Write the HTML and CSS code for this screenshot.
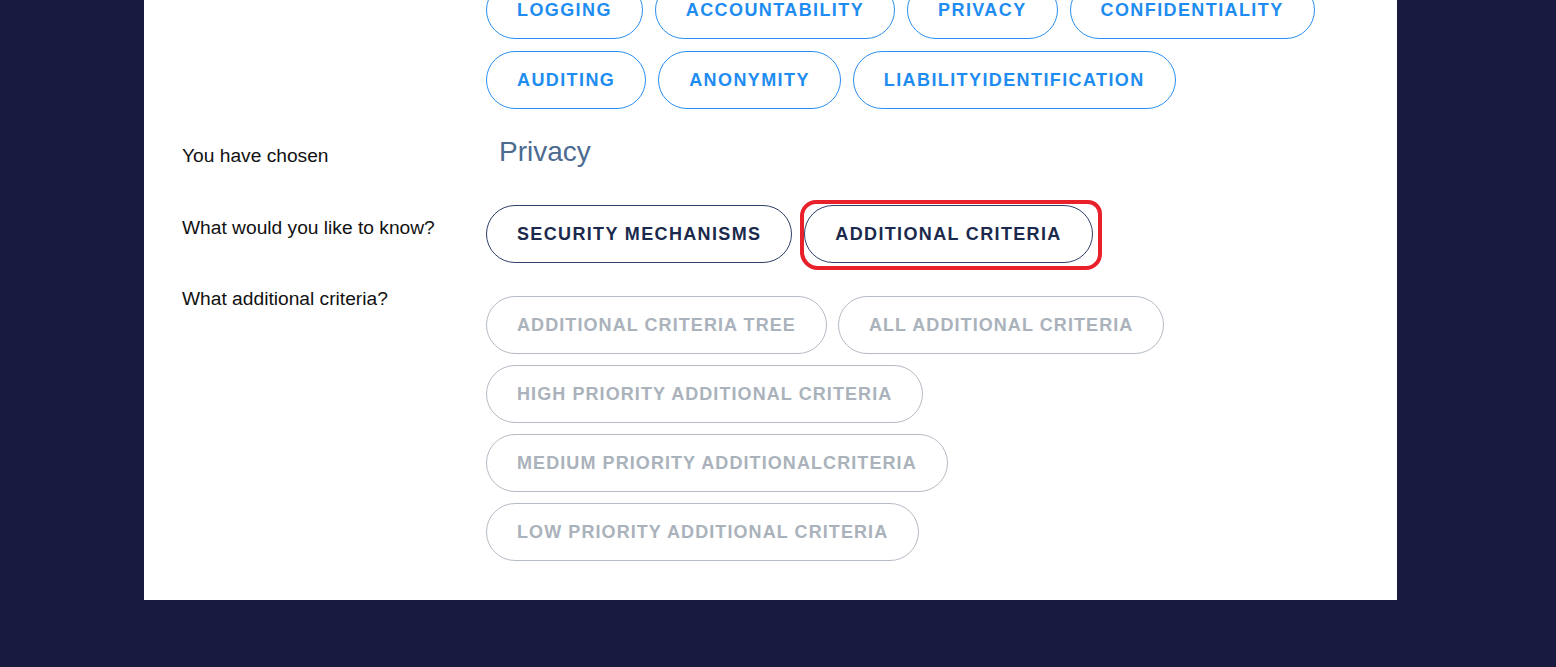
FILE: index.html
```html
<!DOCTYPE html>
<html lang="en">
<head>
<meta charset="utf-8">
<title>Selection</title>
<link rel="stylesheet" href="styles.css">
</head>
<body>
<main class="panel">
  <section class="row row-categories">
    <div class="label"></div>
    <div class="options">
      <button class="pill pill-blue">LOGGING</button>
      <button class="pill pill-blue">ACCOUNTABILITY</button>
      <button class="pill pill-blue">PRIVACY</button>
      <button class="pill pill-blue">CONFIDENTIALITY</button>
      <button class="pill pill-blue">AUDITING</button>
      <button class="pill pill-blue">ANONYMITY</button>
      <button class="pill pill-blue">LIABILITYIDENTIFICATION</button>
    </div>
  </section>

  <section class="row row-chosen">
    <div class="label label-chosen">You have chosen</div>
    <div class="chosen">Privacy</div>
  </section>

  <section class="row row-know">
    <div class="label label-offset">What would you like to know?</div>
    <div class="options">
      <button class="pill pill-navy">SECURITY MECHANISMS</button>
      <span class="marked">
        <button class="pill pill-navy">ADDITIONAL CRITERIA</button>
        <span class="red-ring"></span>
      </span>
    </div>
  </section>

  <section class="row row-criteria">
    <div class="label label-criteria">What additional criteria?</div>
    <div class="options options-offset">
      <button class="pill pill-gray">ADDITIONAL CRITERIA TREE</button>
      <button class="pill pill-gray">ALL ADDITIONAL CRITERIA</button>
      <button class="pill pill-gray">HIGH PRIORITY ADDITIONAL CRITERIA</button>
      <button class="pill pill-gray">MEDIUM PRIORITY ADDITIONALCRITERIA</button>
      <button class="pill pill-gray">LOW PRIORITY ADDITIONAL CRITERIA</button>
    </div>
  </section>
</main>
</body>
</html>
```

FILE: styles.css
```css
html, body {
  margin: 0;
  padding: 0;
  background: #181a40;
  height: 100%;
  overflow: hidden;
}

body {
  font-family: "Liberation Sans", Arial, sans-serif;
  color: #111111;
}

.panel {
  margin-left: 144px;
  width: 1253px;
  background: #ffffff;
  box-sizing: border-box;
  padding: 0 38px 39px 38px;
  display: flex;
  flex-direction: column;
}

.row {
  display: flex;
  align-items: flex-start;
}

.label {
  width: 304px;
  flex: none;
  font-size: 19.2px;
  line-height: 22px;
  color: #111111;
}

.options {
  flex: 1;
  display: flex;
  flex-wrap: wrap;
  gap: 12px 12px;
  align-items: flex-start;
}

.row-categories {
  margin-top: -19px;
}

.row-categories .options {
  max-width: 850px;
}

.row-chosen {
  margin-top: 27px;
}

.label-chosen {
  padding-top: 9px;
}

.chosen {
  font-size: 28px;
  line-height: 32px;
  color: #4d6b91;
  padding-left: 13px;
}

.row-know {
  margin-top: 37px;
}

.label-offset {
  padding-top: 12px;
}

.row-criteria {
  margin-top: 23px;
}

.label-criteria {
  padding-top: 2px;
}

.row-criteria .options {
  max-width: 700px;
  gap: 11px 11px;
}

.options-offset {
  padding-top: 10px;
}

.pill {
  box-sizing: border-box;
  height: 58px;
  padding: 0 30px;
  border-radius: 29px;
  border: 1px solid;
  background: #ffffff;
  font-family: "Liberation Sans", Arial, sans-serif;
  font-weight: bold;
  font-size: 18px;
  letter-spacing: 1.4px;
  display: inline-flex;
  align-items: center;
  justify-content: center;
  white-space: nowrap;
  margin: 0;
  cursor: pointer;
}

.pill-blue {
  color: #1e8cf0;
  border-color: #2b8ff0;
}

.pill-navy {
  color: #1b2a4c;
  border-color: #2e3f6a;
  letter-spacing: 1.35px;
}

.pill-gray {
  color: #aab2bb;
  border-color: #b5bcc4;
  letter-spacing: 1.08px;
  padding: 0 30px;
}

.marked {
  position: relative;
  display: inline-flex;
}

.red-ring {
  position: absolute;
  left: -4px;
  right: -9px;
  top: -5px;
  bottom: -7px;
  border: 4px solid #e8202a;
  border-radius: 16px 14px 16px 18px;
  pointer-events: none;
}
```
